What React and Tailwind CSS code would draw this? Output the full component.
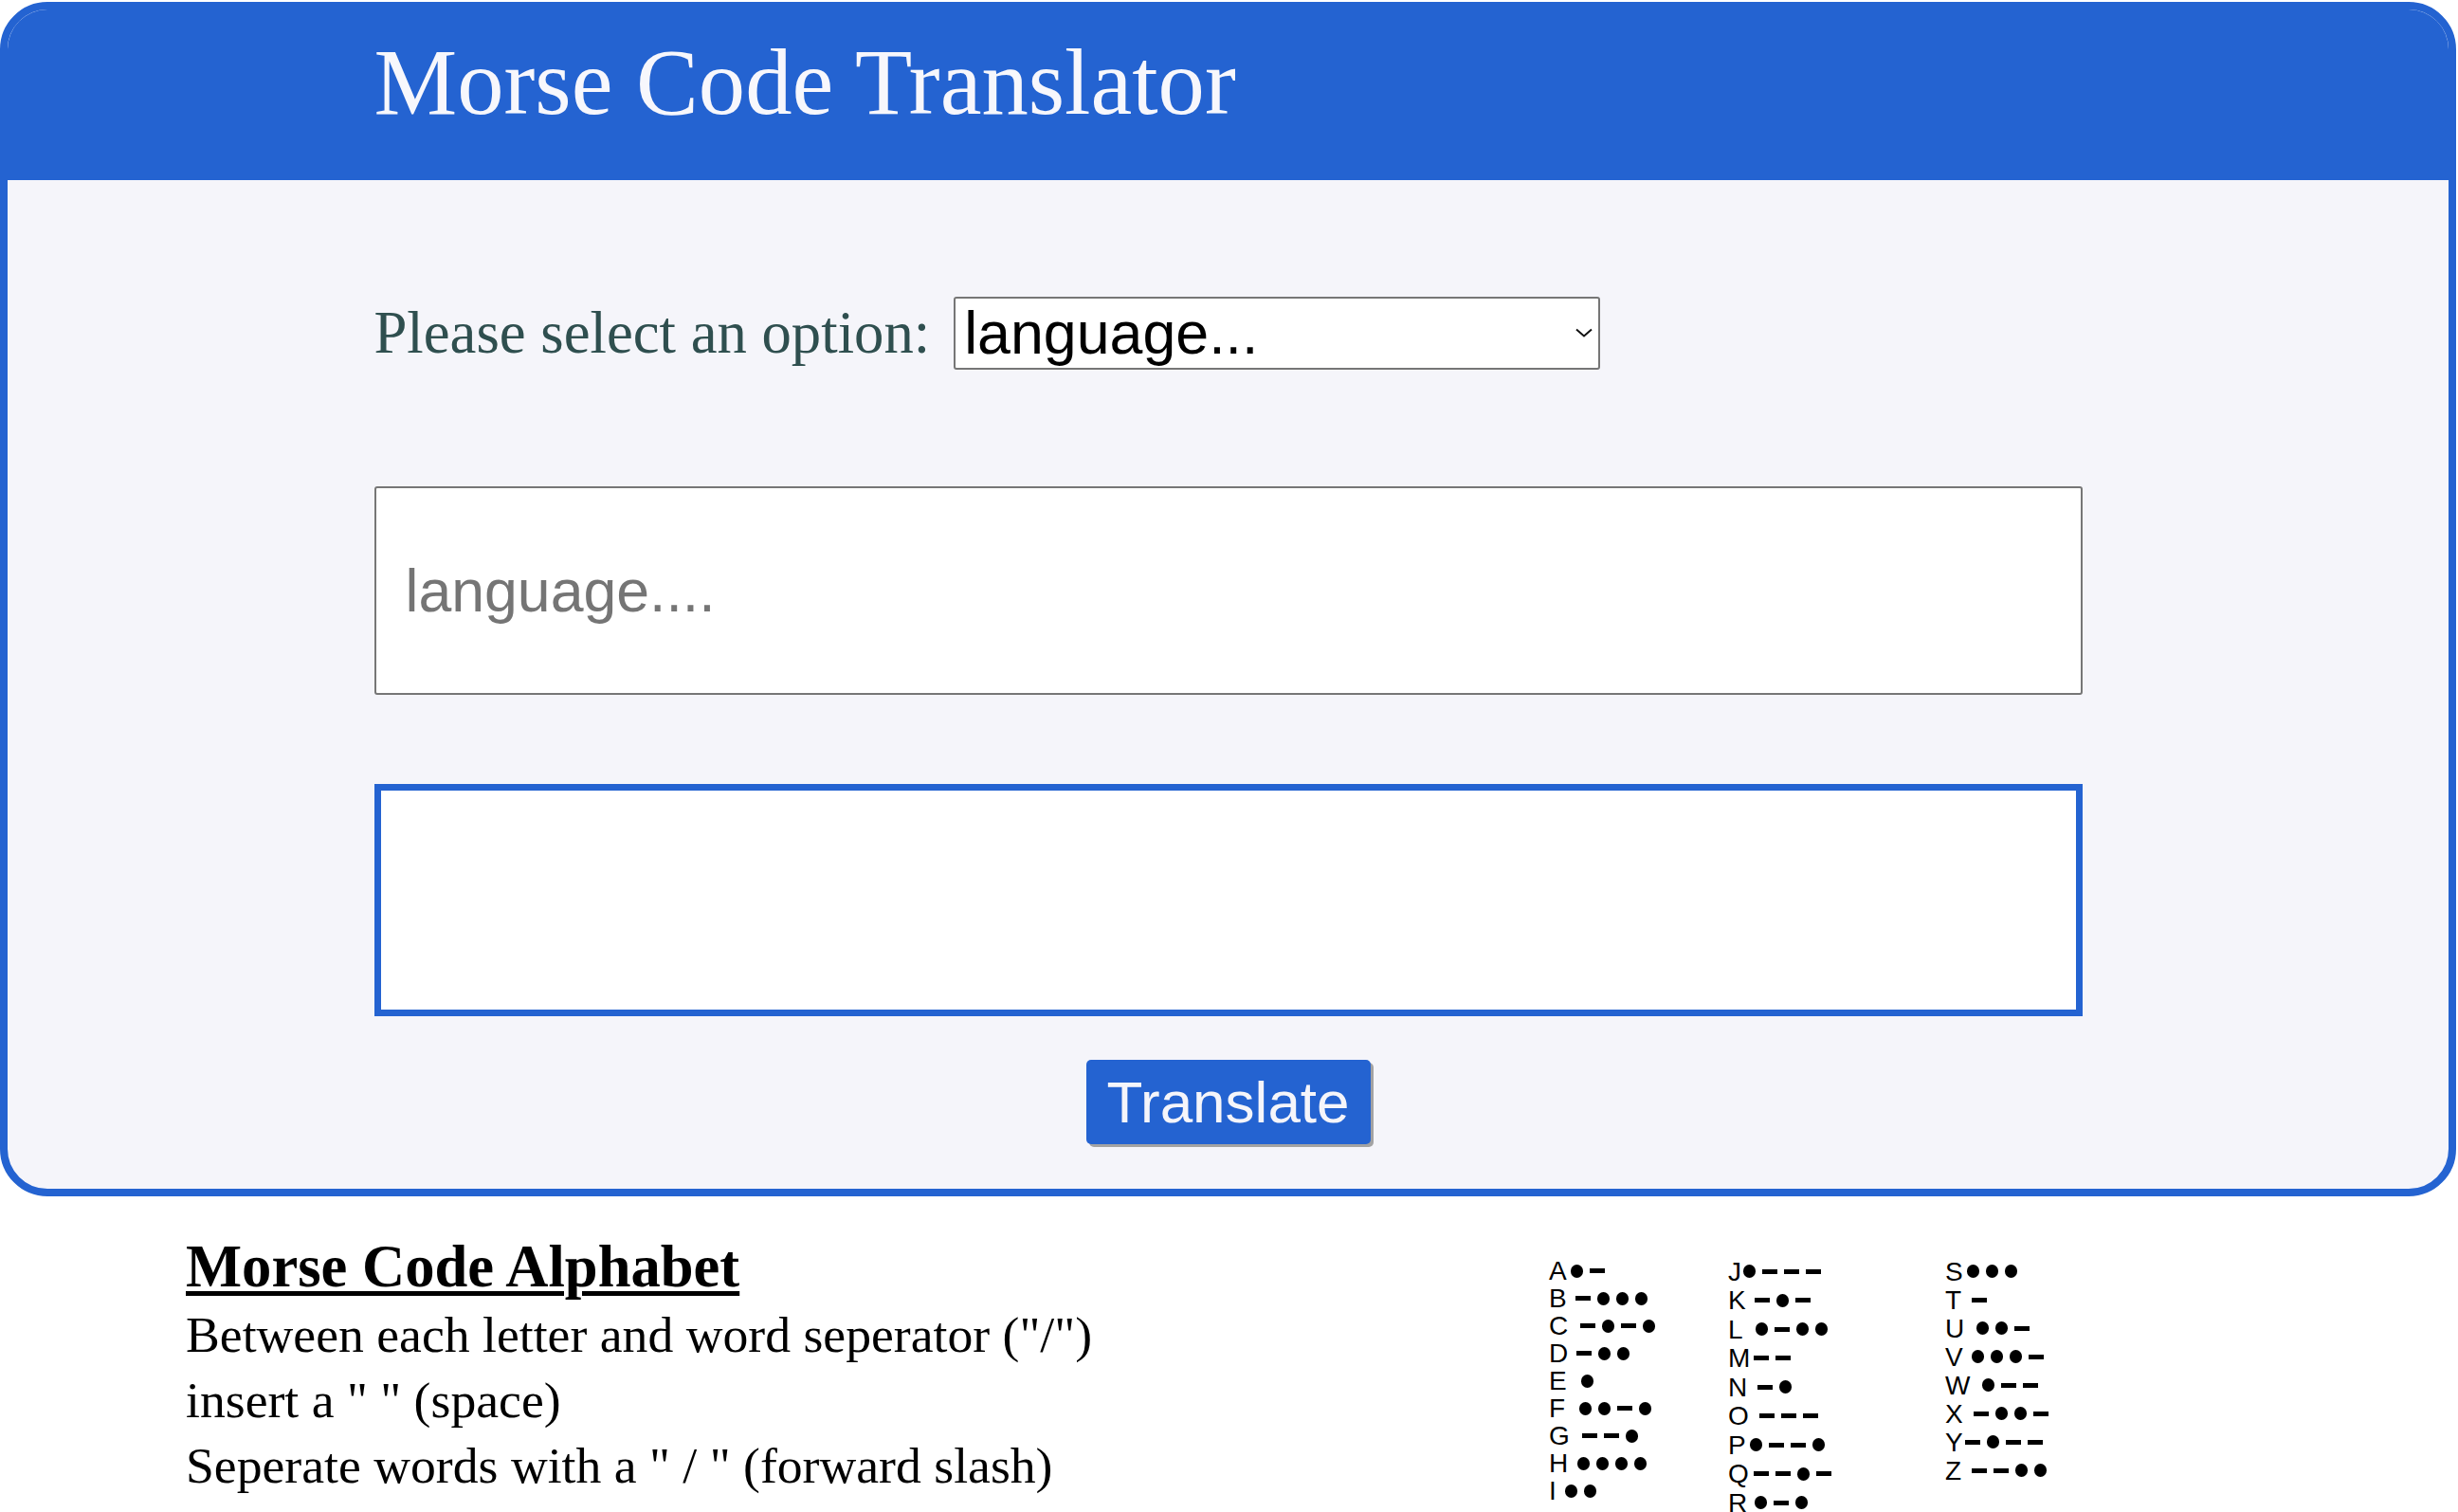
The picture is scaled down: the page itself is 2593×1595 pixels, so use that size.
import { useState } from "react";

/* ───────── Morse chart data ───────── */

const CHART = [
  [
    { l: "A", code: ".-", gap: "ml-[4px]" },
    { l: "B", code: "-...", gap: "ml-[9px]" },
    { l: "C", code: "-.-.", gap: "ml-[13px]" },
    { l: "D", code: "-..", gap: "ml-[9px]" },
    { l: "E", code: ".", gap: "ml-[15px]" },
    { l: "F", code: "..-.", gap: "ml-[15px]" },
    { l: "G", code: "--.", gap: "ml-[13px]" },
    { l: "H", code: "....", gap: "ml-[10px]" },
    { l: "I", code: "..", gap: "ml-[9px]" },
  ],
  [
    { l: "J", code: ".---", gap: "ml-[2px]" },
    { l: "K", code: "-.-", gap: "ml-[9px]" },
    { l: "L", code: ".-..", gap: "ml-[13px]" },
    { l: "M", code: "--", gap: "ml-[4px]" },
    { l: "N", code: "-.", gap: "ml-[11px]" },
    { l: "O", code: "---", gap: "ml-[11px]" },
    { l: "P", code: ".--.", gap: "ml-[4px]" },
    { l: "Q", code: "--.-", gap: "ml-[5px]" },
    { l: "R", code: ".-.", gap: "ml-[8px]" },
  ],
  [
    { l: "S", code: "...", gap: "ml-[4px]" },
    { l: "T", code: "-", gap: "ml-[11px]" },
    { l: "U", code: "..-", gap: "ml-[13px]" },
    { l: "V", code: "...-", gap: "ml-[9px]" },
    { l: "W", code: ".--", gap: "ml-[13px]" },
    { l: "X", code: "-..-", gap: "ml-[11px]" },
    { l: "Y", code: "-.--", gap: "ml-[2px]" },
    { l: "Z", code: "--..", gap: "ml-[11px]" },
  ],
];

const COL_STYLES = ["w-[189px]", "w-[229px]", "w-[200px]"];
const ROW_HEIGHTS = ["h-[29px]", "h-[30.5px]", "h-[30px]"];

const MorseRow = ({ l, code, gap, rowH }) => (
  <div className={`flex items-center ${rowH}`}>
    <span className="text-[28px] leading-[29px] text-black font-['Liberation_Sans',Arial,sans-serif]">
      {l}
    </span>
    <div className={`flex items-center gap-[7px] ${gap}`}>
      {code.split("").map((c, i) =>
        c === "." ? (
          <span key={i} className="w-[13px] h-[14px] rounded-full bg-black" />
        ) : (
          <span key={i} className="w-[16px] h-[5px] bg-black" />
        )
      )}
    </div>
  </div>
);

/* ───────── App ───────── */

export default function App() {
  const [lang, setLang] = useState("");
  const [text, setText] = useState("");

  return (
    <div className="min-h-screen bg-white font-['Liberation_Serif','Times_New_Roman',serif]">

      {/* Card */}
      <div className="mt-[2px] w-[2591px] h-[1260px] rounded-[50px] border-8 border-[#2463d1] bg-[#f5f5fa] overflow-hidden flex flex-col">

        {/* Header */}
        <header className="h-[180px] shrink-0 bg-[#2463d1] pt-[28px]">
          <div className="w-[1802px] mx-auto">
            <h1 className="text-[98.6px] leading-[98px] text-[#f7f7fc]">
              Morse Code Translator
            </h1>
          </div>
        </header>

        {/* Form */}
        <main className="w-[1802px] mx-auto flex flex-col pt-[123px]">
          <div className="flex items-center h-[77px] gap-[25px]">
            <label className="text-[62.7px] leading-[71px] text-[#2f4f4f]">
              Please select an option:
            </label>
            <div className="relative w-[682px] h-[77px]">
              <select
                value={lang}
                onChange={(e) => setLang(e.target.value)}
                className="appearance-none w-full h-full border-2 border-[#767676] rounded-[3px] bg-white pl-[9px] py-0 text-[62.7px] leading-[71px] text-black font-['Liberation_Sans',Arial,sans-serif] outline-none"
              >
                <option value="">language...</option>
                <option value="english">English</option>
                <option value="morse">Morse</option>
              </select>
              <svg
                className="absolute right-[8px] top-[33px] pointer-events-none"
                width="18"
                height="10"
                viewBox="0 0 18 10"
                fill="none"
              >
                <path d="M1 1.5 L9 8.5 L17 1.5" stroke="#111" strokeWidth="2" />
              </svg>
            </div>
          </div>

          <input
            value={text}
            onChange={(e) => setText(e.target.value)}
            placeholder="language...."
            className="mt-[123px] h-[220px] w-full border-2 border-[#767676] rounded-[3px] bg-white pl-[31px] text-[62.6px] leading-[71px] text-black placeholder:text-[#757575] font-['Liberation_Sans',Arial,sans-serif] outline-none"
          />

          <div className="mt-[94px] h-[245px] w-full border-[7px] border-[#2463d1] bg-white" />

          <button className="mt-[46px] self-center w-[300px] h-[89px] rounded-[5px] bg-[#2463d1] text-[62px] leading-none text-[#f5f5fa] font-['Liberation_Sans',Arial,sans-serif] shadow-[3px_3px_0_#a3a3a3]">
            Translate
          </button>
        </main>
      </div>

      {/* Alphabet */}
      <section className="flex">
        <div className="w-[1634px] shrink-0 pl-[196px] pt-[39px] text-black">
          <h2 className="text-[62.6px] leading-[70px] font-bold underline decoration-[5px] underline-offset-[5px]">
            Morse Code Alphabet
          </h2>
          <p className="mt-[3px] text-[53.7px] leading-[69px]">
            Between each letter and word seperator ("/")
          </p>
          <p className="text-[53.7px] leading-[69px]">insert a " " (space)</p>
          <p className="text-[53.7px] leading-[69px]">
            Seperate words with a " / " (forward slash)
          </p>
        </div>

        <div className="flex pt-[64px]">
          {CHART.map((col, ci) => (
            <div key={ci} className={`flex flex-col ${COL_STYLES[ci]}`}>
              {col.map((row) => (
                <MorseRow key={row.l} {...row} rowH={ROW_HEIGHTS[ci]} />
              ))}
            </div>
          ))}
        </div>
      </section>

    </div>
  );
}
